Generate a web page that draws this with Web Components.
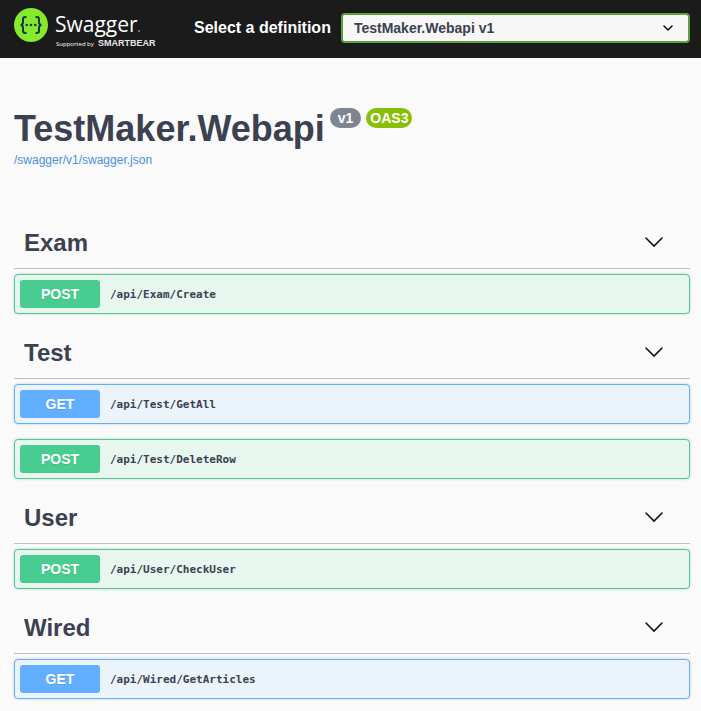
<!DOCTYPE html>
<html lang="en">
<head>
<meta charset="utf-8">
<meta name="viewport" content="width=device-width, initial-scale=1">
<title>Swagger UI</title>
<style>
  body { margin: 0; background: #fafafa; color: #3b4151; font-family: "Liberation Sans", Arial, sans-serif; }
</style>
</head>
<body>
<api-topbar></api-topbar>
<api-main>
  <api-info name="TestMaker.Webapi" version="v1" spec="OAS3" href="/swagger/v1/swagger.json"></api-info>
  <api-tag name="Exam">
    <api-operation method="POST" path="/api/Exam/Create"></api-operation>
  </api-tag>
  <api-tag name="Test">
    <api-operation method="GET" path="/api/Test/GetAll"></api-operation>
    <api-operation method="POST" path="/api/Test/DeleteRow"></api-operation>
  </api-tag>
  <api-tag name="User">
    <api-operation method="POST" path="/api/User/CheckUser"></api-operation>
  </api-tag>
  <api-tag name="Wired">
    <api-operation method="GET" path="/api/Wired/GetArticles"></api-operation>
  </api-tag>
</api-main>
<script>
  class ApiElement extends HTMLElement {
    connectedCallback() {
      if (this.shadowRoot) return;
      this.attachShadow({ mode: "open" }).innerHTML = this.render();
    }
    attr(name) { return this.getAttribute(name) || ""; }
  }

  customElements.define("swagger-logo", class extends ApiElement {
    render() {
      return `<style>
        :host { display: block; flex: none; width: 142px; }
        a { display: block; }
        svg { display: block; }
        text { fill: #fff; font-family: "Open Sans", sans-serif; }
        .brand { fill: #e8e8e8; font-family: "Liberation Sans", Arial, sans-serif; }
      </style>
      <a href="#" aria-label="Swagger"><svg width="142" height="42" viewBox="0 0 142 42">
        <circle cx="17" cy="17" r="17" fill="#85ea2d"/>
        <g fill="none" stroke="#173647" stroke-width="2">
          <path d="M12.500 9h-1.200q-2.300 0-2.300 2.300v3q0 2.700-2.500 2.700q2.500 0 2.500 2.700v3q0 2.300 2.300 2.300h1.200"/>
          <path d="M21.500 9h1.200q2.300 0 2.300 2.300v3q0 2.700 2.500 2.700q-2.500 0-2.500 2.700v3q0 2.300-2.300 2.300h-1.200"/>
        </g>
        <g fill="#173647"><circle cx="12.700" cy="17" r="1.300"/><circle cx="17" cy="17" r="1.300"/><circle cx="21.300" cy="17" r="1.300"/></g>
        <text x="41" y="24" font-size="21">Swagger</text>
        <circle cx="125" cy="23" r="0.700" fill="#fff"/>
        <text x="42" y="38" font-size="6">Supported by</text>
        <text class="brand" x="84" y="38" font-size="9" font-weight="700">SMARTBEAR</text>
      </svg></a>`;
    }
  });

  customElements.define("api-topbar", class extends ApiElement {
    render() {
      return `<style>
        :host { display: block; background: #1b1b1b; }
        header { display: flex; align-items: center; gap: 38px; box-sizing: border-box; min-height: 58px; padding: 8px 11px 8px 14px; }
        .pick { flex: 1; display: flex; align-items: center; gap: 10px; min-width: 0; padding-bottom: 2px; }
        label { color: #fff; font-weight: 700; font-size: 16px; white-space: nowrap; }
        .box { flex: 1; min-width: 0; display: grid; align-items: center; }
        .box > * { grid-area: 1 / 1; }
        select { appearance: none; width: 100%; height: 30px; margin: 0; padding: 0 40px 0 11px; border: 2px solid #62a03f;
          border-radius: 4px; background: #f7f7f7; color: #3b4151; font: 700 14px "Liberation Sans", Arial, sans-serif; }
        svg { justify-self: end; margin-right: 16px; pointer-events: none; }
      </style>
      <header>
        <swagger-logo></swagger-logo>
        <div class="pick">
          <label for="definition">Select a definition</label>
          <div class="box">
            <select id="definition"><option>TestMaker.Webapi v1</option></select>
            <svg width="12" height="8" viewBox="0 0 12 8" fill="none" stroke="#111" stroke-width="1.600" stroke-linecap="round" stroke-linejoin="round"><path d="M2 2l4 4 4-4"/></svg>
          </div>
        </div>
      </header>`;
    }
  });

  customElements.define("api-main", class extends ApiElement {
    render() {
      return `<style>
        :host { display: block; }
        main { padding: 50px 11px 11px 14px; }
      </style><main><slot></slot></main>`;
    }
  });

  customElements.define("api-info", class extends ApiElement {
    render() {
      return `<style>
        :host { display: block; margin-bottom: 51px; }
        .title { display: flex; align-items: flex-start; }
        h1 { margin: 0 5px 0 0; font-size: 36px; line-height: 42px; font-weight: 700; }
        .badge { margin-right: 5px; padding: 0 8px; border-radius: 10px; background: #7d8492; color: #fff;
          font-size: 14px; line-height: 20px; font-weight: 700; }
        .spec { padding: 0 4px; background: #89bf04; }
        a { display: block; width: fit-content; margin-top: 2px; color: #4990e2; font-size: 12px; line-height: 16px; text-decoration: none; }
      </style>
      <div class="title"><h1>${this.attr("name")}</h1><span class="badge">${this.attr("version")}</span><span class="badge spec">${this.attr("spec")}</span></div>
      <a href="${this.attr("href")}">${this.attr("href")}</a>`;
    }
  });

  customElements.define("api-tag", class extends ApiElement {
    render() {
      return `<style>
        :host { display: block; }
        .head { display: flex; align-items: center; box-sizing: border-box; height: 50px; padding: 0 25px 2px 10px; border-bottom: 1px solid #bebfc2; }
        h2 { flex: 1; margin: 0; font-size: 24px; line-height: 28px; font-weight: 700; }
        button { display: grid; place-items: start center; width: 22px; height: 14px; padding: 0; border: 0; background: none; cursor: pointer; }
        .list { display: grid; gap: 15px; padding: 5px 0 15px; }
      </style>
      <section>
        <div class="head"><h2>${this.attr("name")}</h2>
          <button type="button" aria-expanded="true" aria-label="Collapse ${this.attr("name")}"><svg width="20" height="12" viewBox="0 0 20 12" fill="none" stroke="#111" stroke-width="1.600" stroke-linecap="round"><path d="M2 2l8 8 8-8"/></svg></button>
        </div>
        <div class="list"><slot></slot></div>
      </section>`;
    }
  });

  customElements.define("api-operation", class extends ApiElement {
    render() {
      const get = this.attr("method") === "GET";
      const color = get ? "#61affe" : "#49cc90";
      const back = get ? "#ebf3fb" : "#e8f6f0";
      return `<style>
        :host { display: block; }
        button { display: flex; align-items: center; gap: 10px; box-sizing: border-box; width: 100%; min-height: 40px; padding: 5px;
          border: 1px solid ${color}; border-radius: 4px; background: ${back}; box-shadow: 0 0 3px rgba(0,0,0,.19); color: #3b4151; text-align: left; cursor: pointer; }
        .method { width: 80px; border-radius: 3px; background: ${color}; color: #fff; text-align: center;
          font: 700 14px/28px "Liberation Sans", Arial, sans-serif; text-shadow: 0 1px 0 rgba(0,0,0,.1); }
        .path { padding-top: 2px; font: 700 11px/16px "DejaVu Sans Mono", monospace; }
      </style>
      <button type="button"><span class="method">${this.attr("method")}</span><span class="path">${this.attr("path")}</span></button>`;
    }
  });
</script>
</body>
</html>
